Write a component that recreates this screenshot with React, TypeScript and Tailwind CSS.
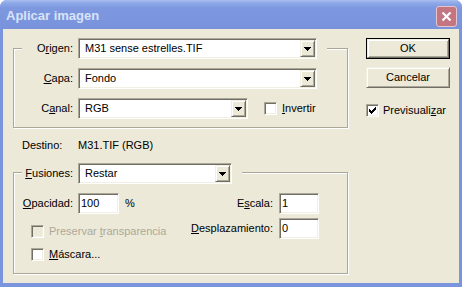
import React from "react";

const sunken =
  "border border-t-[#aca899] border-l-[#aca899] border-b-white border-r-white shadow-[inset_1px_1px_0_#716f64,inset_-1px_-1px_0_#f1efe2]";
const raised =
  "border border-t-[#f1efe2] border-l-[#f1efe2] border-b-[#716f64] border-r-[#716f64] shadow-[inset_1px_1px_0_#ffffff,inset_-1px_-1px_0_#aca899]";
const etched =
  "border border-[#aca899] shadow-[inset_1px_1px_0_#ffffff,1px_1px_0_#ffffff]";

function Arrow() {
  return (
    <svg width="7" height="4" shapeRendering="crispEdges" fill="#000">
      <rect x="0" y="0" width="7" height="1" />
      <rect x="1" y="1" width="5" height="1" />
      <rect x="2" y="2" width="3" height="1" />
      <rect x="3" y="3" width="1" height="1" />
    </svg>
  );
}

function Select({ value, className }: { value: string; className: string }) {
  return (
    <div className={`${sunken} ${className} h-[21px] bg-white flex items-center`}>
      <span className="flex-1 pl-[6px] leading-[13px] whitespace-nowrap">{value}</span>
      <div
        className={`${raised} bg-[#ece9d8] w-[15px] h-[17px] mr-px flex items-center justify-center`}
      >
        <Arrow />
      </div>
    </div>
  );
}

function Input({ value, className }: { value: string; className: string }) {
  return (
    <div className={`${sunken} ${className} h-[21px] bg-white flex items-center pl-[2px]`}>
      {value}
    </div>
  );
}

function Check({ checked, disabled }: { checked?: boolean; disabled?: boolean }) {
  return (
    <div
      className={`${sunken} ${
        disabled ? "bg-[#ece9d8]" : "bg-white"
      } w-[13px] h-[13px] shrink-0 flex items-center justify-center`}
    >
      {checked && (
        <svg width="7" height="7" shapeRendering="crispEdges" fill="#000">
          <rect x="6" y="0" width="1" height="1" />
          <rect x="5" y="1" width="2" height="1" />
          <rect x="0" y="2" width="1" height="1" />
          <rect x="4" y="2" width="3" height="1" />
          <rect x="0" y="3" width="2" height="1" />
          <rect x="3" y="3" width="3" height="1" />
          <rect x="0" y="4" width="5" height="1" />
          <rect x="1" y="5" width="3" height="1" />
          <rect x="2" y="6" width="1" height="1" />
        </svg>
      )}
    </div>
  );
}

function Label({ children }: { children: React.ReactNode }) {
  return <span className="w-[51px] text-right whitespace-nowrap">{children}</span>;
}

export default function App() {
  return (
    <div className="w-[462px] h-[287px] font-['Liberation_Sans',Arial,sans-serif] text-[11px] leading-[13px] text-black">
      <div className="w-full h-full flex flex-col rounded-t-[7px] overflow-hidden bg-[#7a95de]">
        {/* Title bar */}
        <div className="h-[29px] shrink-0 flex items-start pl-[6px] pr-[5px] pt-[8px] bg-[linear-gradient(180deg,#a9bef1_0px,#8ea8e8_3px,#7d98df_8px,#7a95de_22px,#7893dc_29px)]">
          <span className="flex-1 font-bold text-[13px] leading-[16px] text-[#d8e3f8]">
            Aplicar imagen
          </span>
          <div className="-mt-[2px] w-[21px] h-[21px] rounded-[3px] border border-[#e6c6cc] bg-[#c37682] flex items-center justify-center">
            <svg width="11" height="11" viewBox="0 0 11 11">
              <path d="M1.5 1.5 L9.5 9.5 M9.5 1.5 L1.5 9.5" stroke="#ffffff" strokeWidth="2.2" />
            </svg>
          </div>
        </div>

        {/* Body */}
        <div className="flex-1 mx-[3px] mb-[4px] bg-[#ece9d8] flex flex-col pt-[9px]">
          <div className="flex items-start pl-[10px]">
            {/* Group 1 */}
            <div className={`${etched} mt-[10px] w-[335px] pl-[8px] pb-[8px]`}>
              <div className="-mt-[11px] w-fit h-[21px] bg-[#ece9d8] flex items-center gap-[5px] pr-[10px]">
                <Label>
                  O<u>r</u>igen:
                </Label>
                <Select value="M31 sense estrelles.TIF" className="w-[239px]" />
              </div>
              <div className="mt-[9px] h-[21px] flex items-center gap-[5px]">
                <Label>
                  <u>C</u>apa:
                </Label>
                <Select value="Fondo" className="w-[239px]" />
              </div>
              <div className="mt-[9px] h-[21px] flex items-center gap-[5px]">
                <Label>
                  C<u>a</u>nal:
                </Label>
                <Select value="RGB" className="w-[170px]" />
                <div className="ml-[11px] flex items-center gap-[5px]">
                  <Check />
                  <span>
                    <u>I</u>nvertir
                  </span>
                </div>
              </div>
            </div>

            {/* Right column */}
            <div className="ml-[18px] w-[84px] flex flex-col">
              <div className="h-[21px] border border-black">
                <div className={`${raised} h-full bg-[#ece9d8] flex items-center justify-center`}>
                  OK
                </div>
              </div>
              <div
                className={`${raised} mt-[8px] h-[21px] bg-[#ece9d8] flex items-center justify-center`}
              >
                Cancelar
              </div>
              <div className="mt-[16px] h-[13px] flex items-center gap-[4px]">
                <Check checked />
                <span>
                  Previsuali<u>z</u>ar
                </span>
              </div>
            </div>
          </div>

          {/* Destino */}
          <div className="mt-[11px] pl-[19px] h-[13px] flex items-center">
            <span className="w-[56px]">Destino:</span>
            <span>M31.TIF (RGB)</span>
          </div>

          {/* Group 2 */}
          <div className={`${etched} mt-[20px] ml-[10px] w-[335px] pl-[8px] pr-[28px] pb-[12px]`}>
            <div className="-mt-[10px] w-fit h-[21px] bg-[#ece9d8] flex items-center gap-[5px] pr-[10px]">
              <Label>
                <u>F</u>usiones:
              </Label>
              <Select value="Restar" className="w-[154px]" />
            </div>
            <div className="mt-[9px] flex justify-between items-start">
              <div className="flex flex-col">
                <div className="h-[21px] flex items-center gap-[5px]">
                  <Label>
                    <u>O</u>pacidad:
                  </Label>
                  <Input value="100" className="w-[41px]" />
                  <span className="ml-[1px]">%</span>
                </div>
                <div className="mt-[11px] ml-[9px] h-[13px] flex items-center gap-[5px] text-[#aca899]">
                  <Check disabled />
                  <span>
                    Preservar <u>t</u>ransparencia
                  </span>
                </div>
                <div className="mt-[10px] ml-[9px] h-[13px] flex items-center gap-[5px]">
                  <Check />
                  <span>
                    <u>M</u>áscara...
                  </span>
                </div>
              </div>
              <div className="flex flex-col items-end">
                <div className="h-[21px] flex items-center gap-[6px]">
                  <span>
                    E<u>s</u>cala:
                  </span>
                  <Input value="1" className="w-[40px]" />
                </div>
                <div className="mt-[4px] h-[21px] flex items-center gap-[6px]">
                  <span>
                    <u>D</u>esplazamiento:
                  </span>
                  <Input value="0" className="w-[40px]" />
                </div>
              </div>
            </div>
          </div>
        </div>
      </div>
    </div>
  );
}
